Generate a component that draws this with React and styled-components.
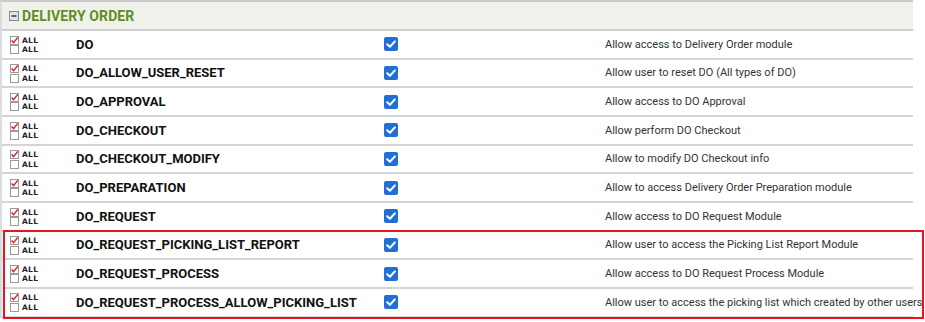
import React from 'react';
import styled, { createGlobalStyle } from 'styled-components';

const GlobalStyle = createGlobalStyle`
  body {
    margin: 0;
    background: #fff;
    font-family: Roboto, "Liberation Sans", Arial, sans-serif;
  }
`;

const rows = [
  { name: 'DO', desc: 'Allow access to Delivery Order module' },
  { name: 'DO_ALLOW_USER_RESET', desc: 'Allow user to reset DO (All types of DO)' },
  { name: 'DO_APPROVAL', desc: 'Allow access to DO Approval' },
  { name: 'DO_CHECKOUT', desc: 'Allow perform DO Checkout' },
  { name: 'DO_CHECKOUT_MODIFY', desc: 'Allow to modify DO Checkout info' },
  { name: 'DO_PREPARATION', desc: 'Allow to access Delivery Order Preparation module' },
  { name: 'DO_REQUEST', desc: 'Allow access to DO Request Module' },
];

const marked = [
  { name: 'DO_REQUEST_PICKING_LIST_REPORT', desc: 'Allow user to access the Picking List Report Module' },
  { name: 'DO_REQUEST_PROCESS', desc: 'Allow access to DO Request Process Module' },
  { name: 'DO_REQUEST_PROCESS_ALLOW_PICKING_LIST', desc: 'Allow user to access the picking list which created by other users' },
];

function MiniBox({ checked }) {
  return (
    <svg width="9" height="9" viewBox="0 0 9 9">
      <rect x="0.5" y="0.5" width="8" height="8" fill="#fff" stroke="#9a9a9a" />
      {checked && <path d="M1.6 4.4 L3.6 6.7 L7.8 1.4" fill="none" stroke="#d9222a" strokeWidth="1.5" />}
    </svg>
  );
}

function BlueCheck() {
  return (
    <svg width="14" height="14" viewBox="0 0 14 14">
      <rect x="0" y="0" width="14" height="14" rx="2" fill="#1f6fd6" />
      <path d="M3.2 7.2 L5.9 9.8 L10.9 4.4" fill="none" stroke="#fff" strokeWidth="2" strokeLinecap="round" strokeLinejoin="round" />
    </svg>
  );
}

function Row({ name, desc }) {
  return (
    <TableRow>
      <AllStack>
        <AllLine><MiniBox checked /><span>ALL</span></AllLine>
        <AllLine><MiniBox /><span>ALL</span></AllLine>
      </AllStack>
      <Name>{name}</Name>
      <CheckCell><BlueCheck /></CheckCell>
      <Desc>{desc}</Desc>
    </TableRow>
  );
}

export default function App() {
  return (
    <>
      <GlobalStyle />
      <Page>
        <Section>
          <Header>
            <Toggle>
              <svg width="10" height="10" viewBox="0 0 10 10">
                <rect x="0.5" y="0.5" width="9" height="9" fill="#dfe3ea" stroke="#7d8694" />
                <rect x="2.5" y="4.2" width="5" height="1.6" fill="#3c4450" />
              </svg>
            </Toggle>
            <Title>DELIVERY ORDER</Title>
          </Header>
          {rows.map((r) => <Row key={r.name} {...r} />)}
          <Highlight>
            {marked.map((r) => <Row key={r.name} {...r} />)}
          </Highlight>
        </Section>
      </Page>
    </>
  );
}

const Page = styled.div`
  width: 925px;
  height: 322px;
  overflow: hidden;
`;

const Section = styled.div`
  width: 913px;
  border-top: 2px solid #c9c9c9;
  border-left: 2px solid #dcdcdc;
  box-sizing: border-box;
`;

const Header = styled.div`
  height: 29px;
  box-sizing: border-box;
  background: #f1f1ec;
  border-bottom: 2px solid #cfcfcf;
  display: flex;
  align-items: center;
  padding-left: 7px;
  gap: 3px;
`;

const Toggle = styled.span`
  display: flex;
  align-items: center;
`;

const Title = styled.span`
  color: #5f8f23;
  font-weight: 700;
  font-size: 14px;
  letter-spacing: 0.1px;
`;

const TableRow = styled.div`
  height: 28.67px;
  box-sizing: border-box;
  border-bottom: 2px solid #d4d4d4;
  display: grid;
  grid-template-columns: 74px 308px 221px 1fr;
  align-items: center;
`;

const AllStack = styled.div`
  display: flex;
  flex-direction: column;
  padding-left: 8px;
  padding-top: 1px;
`;

const AllLine = styled.div`
  display: flex;
  align-items: center;
  gap: 3px;
  height: 9.5px;
  span {
    font-family: "DejaVu Sans", sans-serif;
    font-size: 7.5px;
    font-weight: 700;
    color: #222;
    letter-spacing: 0.3px;
  }
`;

const Name = styled.div`
  font-weight: 700;
  font-size: 13px;
  color: #111;
  white-space: nowrap;
`;

const CheckCell = styled.div`
  display: flex;
  align-items: center;
`;

const Desc = styled.div`
  font-size: 11px;
  color: #333;
  white-space: nowrap;
`;

const Highlight = styled.div`
  position: relative;
  &::after {
    content: '';
    position: absolute;
    top: -2px;
    left: 1px;
    right: -11px;
    bottom: -1px;
    border: 2px solid #e5161f;
    pointer-events: none;
  }
`;
